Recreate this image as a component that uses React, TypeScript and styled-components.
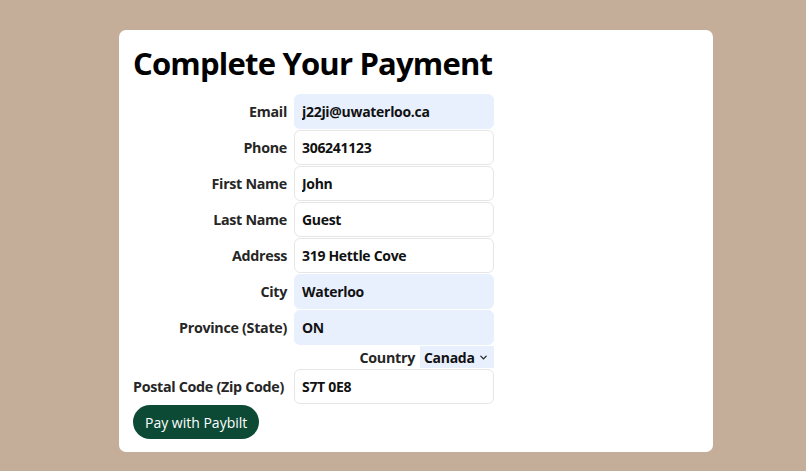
import styled, { createGlobalStyle } from "styled-components";

const GlobalStyle = createGlobalStyle`
  html, body {
    margin: 0;
    padding: 0;
    background: #c4ae99;
  }
  body {
    font-family: "Open Sans", "Noto Sans", sans-serif;
    color: #1b1b1b;
  }
`;

const Page = styled.div`
  display: flex;
  justify-content: flex-start;
  padding: 30px 0 19px 119px;
  min-height: 471px;
  box-sizing: border-box;
`;

const Card = styled.div`
  width: 594px;
  box-sizing: border-box;
  background: #fff;
  border-radius: 7px;
  padding: 11px 14px 13px;
`;

const Title = styled.h1`
  margin: 0 0 9px;
  font-size: 31px;
  line-height: 44px;
  font-weight: 700;
  color: #000;
  letter-spacing: -0.8px;
`;

const FormGrid = styled.form`
  display: grid;
  grid-template-columns: 154px 200px;
  column-gap: 7px;
  row-gap: 1px;
  align-items: center;
  width: max-content;
`;

const Label = styled.label<{ $start?: boolean }>`
  justify-self: ${(p) => (p.$start ? "start" : "end")};
  white-space: nowrap;
  font-size: 14.3px;
  font-weight: 700;
  letter-spacing: -0.3px;
  color: #262626;
`;

const Field = styled.input<{ $filled?: boolean }>`
  box-sizing: border-box;
  width: 200px;
  height: 35px;
  padding: 0 7px;
  border: 1px solid ${(p) => (p.$filled ? "#e8f0fe" : "#e6e6e6")};
  border-radius: 6px;
  background: ${(p) => (p.$filled ? "#e8f0fe" : "#fff")};
  font-family: inherit;
  font-size: 14px;
  font-weight: 700;
  letter-spacing: -0.3px;
  color: #111;
  outline: none;
`;

const CountryRow = styled.div`
  grid-column: 1 / -1;
  justify-self: end;
  display: flex;
  align-items: center;
  gap: 5px;
  height: 22px;
`;

const SelectBox = styled.div`
  display: flex;
  align-items: center;
  gap: 4px;
  height: 22px;
  padding: 0 6px 0 4px;
  background: #e8f0fe;
`;

const Select = styled.select`
  appearance: none;
  border: none;
  background: transparent;
  padding: 0;
  font-family: inherit;
  font-size: 14px;
  font-weight: 700;
  letter-spacing: -0.3px;
  color: #111;
  outline: none;
`;

const PayButton = styled.button`
  grid-column: 1;
  justify-self: start;
  height: 34px;
  padding: 0 12px;
  border: none;
  border-radius: 17px;
  background: #0d4a35;
  color: #fff;
  font-family: inherit;
  font-size: 14px;
  font-weight: 400;
`;

const fields = [
  { id: "email", label: "Email", value: "j22ji@uwaterloo.ca", filled: true },
  { id: "phone", label: "Phone", value: "306241123" },
  { id: "first", label: "First Name", value: "John" },
  { id: "last", label: "Last Name", value: "Guest" },
  { id: "address", label: "Address", value: "319 Hettle Cove" },
  { id: "city", label: "City", value: "Waterloo", filled: true },
  { id: "province", label: "Province (State)", value: "ON", filled: true },
];

export default function App() {
  return (
    <>
      <GlobalStyle />
      <Page>
        <Card>
          <Title>Complete Your Payment</Title>
          <FormGrid onSubmit={(e) => e.preventDefault()}>
            {fields.flatMap((f) => [
              <Label key={f.id + "-label"} htmlFor={f.id}>
                {f.label}
              </Label>,
              <Field
                key={f.id}
                id={f.id}
                defaultValue={f.value}
                $filled={f.filled}
              />,
            ])}
            <CountryRow>
              <Label htmlFor='country'>Country</Label>
              <SelectBox>
                <Select id='country' defaultValue='CA'>
                  <option value='CA'>Canada</option>
                </Select>
                <svg width='9' height='9' viewBox='0 0 10 10'>
                  <path
                    d='M2 3.5 L5 6.5 L8 3.5'
                    fill='none'
                    stroke='#222'
                    strokeWidth='1.4'
                    strokeLinecap='round'
                  />
                </svg>
              </SelectBox>
            </CountryRow>
            <Label htmlFor='postal' $start>
              Postal Code (Zip Code)
            </Label>
            <Field id='postal' defaultValue='S7T 0E8' />
            <PayButton type='submit'>Pay with Paybilt</PayButton>
          </FormGrid>
        </Card>
      </Page>
    </>
  );
}
